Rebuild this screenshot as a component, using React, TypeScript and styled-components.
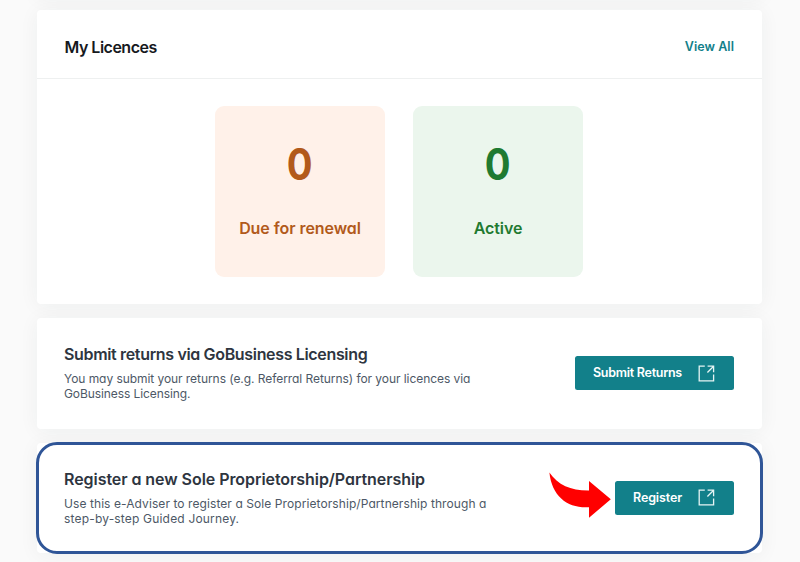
import React from "react";
import styled, { createGlobalStyle } from "styled-components";

const GlobalStyle = createGlobalStyle`
  *, *::before, *::after { box-sizing: border-box; }
  body {
    margin: 0;
    height: 562px;
    overflow: hidden;
    background: #fafafa;
    font-family: Inter, "Liberation Sans", sans-serif;
    font-feature-settings: "cv11" 1;
  }
`;

const Page = styled.main`
  display: flex;
  flex-direction: column;
  gap: 14px;
  width: 725px;
  margin: -44px 0 0 37px;
`;

const Card = styled.section`
  position: relative;
  background: #fff;
  border-radius: 4px;
  box-shadow: 0 2px 20px rgba(20, 60, 50, 0.055);
`;

const PreviousCard = styled(Card)`
  height: 40px;
`;

const LicencesCard = styled(Card)`
  height: 294px;
`;

const CardHeader = styled.header`
  display: flex;
  align-items: center;
  justify-content: space-between;
  height: 69px;
  padding: 5px 28px 0 27.5px;
  border-bottom: 1px solid #eef0f0;
`;

const CardTitle = styled.h2`
  margin: 0;
  font-size: 16px;
  line-height: 20px;
  font-weight: 600;
  letter-spacing: -0.5px;
  color: #16191d;
`;

const ViewAll = styled.a`
  font-size: 12.5px;
  line-height: 20px;
  font-weight: 600;
  letter-spacing: 0.05px;
  color: #12808a;
  text-decoration: none;
`;

const Tiles = styled.div`
  display: flex;
  justify-content: center;
  gap: 28px;
  padding: 27px 1px 0 0;
`;

const Tile = styled.div<{ $tone: "orange" | "green" }>`
  display: flex;
  flex-direction: column;
  align-items: center;
  width: 170px;
  height: 171px;
  padding-top: 32px;
  border-radius: 9px;
  background: ${(p) => (p.$tone === "orange" ? "#fff1e9" : "#ebf6ed")};
  color: ${(p) => (p.$tone === "orange" ? "#b25a1b" : "#1f7a31")};
`;

const Count = styled.strong`
  font-size: 43.5px;
  line-height: 52px;
  font-weight: 700;
  transform: scaleX(0.88);
`;

const TileLabel = styled.span`
  margin-top: 28px;
  font-size: 16px;
  line-height: 20px;
  font-weight: 600;
  letter-spacing: -0.06px;
`;

const ActionCard = styled(Card)`
  display: flex;
  align-items: center;
  justify-content: space-between;
  height: 110.5px;
  padding: 0 28px 0 27px;
`;

const Outline = styled.div`
  position: absolute;
  inset: -0.5px -1px -1px -1px;
  border: 3px solid #2f5597;
  border-radius: 21px;
  pointer-events: none;
`;

const Copy = styled.div`
  padding-bottom: 1px;
`;

const ActionTitle = styled.h3<{ $tracking: number }>`
  margin: 0 0 7px;
  font-size: 16px;
  line-height: 20px;
  font-weight: 600;
  letter-spacing: ${(p) => p.$tracking}px;
  color: #2e353f;
`;

const Description = styled.p`
  margin: 0;
  font-size: 12px;
  line-height: 15px;
  color: #4d5866;
`;

const TextLine = styled.span<{ $tracking: number }>`
  display: block;
  white-space: nowrap;
  letter-spacing: ${(p) => p.$tracking}px;
`;

const Actions = styled.div`
  display: flex;
  align-items: center;
`;

const ActionButton = styled.button<{ $width: number; $tracking: number }>`
  display: flex;
  align-items: center;
  justify-content: space-between;
  width: ${(p) => p.$width}px;
  height: 34px;
  padding: 0 19px 0 18px;
  border: 0;
  border-radius: 2.5px;
  background: #12808a;
  color: #fff;
  font: 600 12.5px/16px Inter, "Liberation Sans", sans-serif;
  letter-spacing: ${(p) => p.$tracking}px;
  white-space: nowrap;
`;

const Arrow = styled.svg`
  display: block;
  margin: 0 4px 5px 0;
`;

const ExternalIcon = () => (
  <svg width="17" height="17" viewBox="0 0 17 17" fill="none" stroke="#e6f4f4" strokeWidth="1.3">
    <path d="M6.8 1.2H1.2V15.8H15.6V9.6" />
    <path d="M9.6 1.2H15.6V7.2M15.4 1.5L9.4 7.5" />
  </svg>
);

const PointerArrow = () => (
  <Arrow width="62" height="46" viewBox="0 0 62 46" fill="#f00">
    <path d="M0.4 0.5C9 13 22 18.8 40 18.6V9L61.8 27.2L40 45.8V35.2C19 36.5 3 25 0.4 0.5Z" />
  </Arrow>
);

export default function App() {
  return (
    <>
      <GlobalStyle />
      <Page>
        <PreviousCard />
        <LicencesCard>
          <CardHeader>
            <CardTitle>My Licences</CardTitle>
            <ViewAll>View All</ViewAll>
          </CardHeader>
          <Tiles>
            <Tile $tone="orange">
              <Count>0</Count>
              <TileLabel>Due for renewal</TileLabel>
            </Tile>
            <Tile $tone="green">
              <Count>0</Count>
              <TileLabel>Active</TileLabel>
            </Tile>
          </Tiles>
        </LicencesCard>
        <ActionCard>
          <Copy>
            <ActionTitle $tracking={-0.34}>Submit returns via GoBusiness Licensing</ActionTitle>
            <Description>
              <TextLine $tracking={-0.06}>
                You may submit your returns (e.g. Referral Returns) for your licences via
              </TextLine>
              <TextLine $tracking={-0.09}>GoBusiness Licensing.</TextLine>
            </Description>
          </Copy>
          <Actions>
            <ActionButton $width={159} $tracking={-0.27}>
              Submit Returns
              <ExternalIcon />
            </ActionButton>
          </Actions>
        </ActionCard>
        <ActionCard>
          <Outline />
          <Copy>
            <ActionTitle $tracking={-0.06}>Register a new Sole Proprietorship/Partnership</ActionTitle>
            <Description>
              <TextLine $tracking={0.08}>
                Use this e-Adviser to register a Sole Proprietorship/Partnership through a
              </TextLine>
              <TextLine $tracking={0.18}>step-by-step Guided Journey.</TextLine>
            </Description>
          </Copy>
          <Actions>
            <PointerArrow />
            <ActionButton $width={119} $tracking={-0.12}>
              Register
              <ExternalIcon />
            </ActionButton>
          </Actions>
        </ActionCard>
      </Page>
    </>
  );
}
